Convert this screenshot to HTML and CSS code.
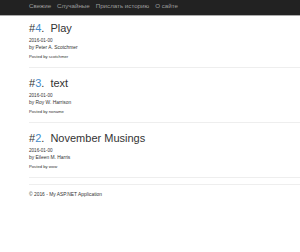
FILE: index.html
```html
<!DOCTYPE html>
<html lang="ru">
<head>
    <meta charset="UTF-8">
    <meta name="viewport" content="width=device-width, initial-scale=1.0">
    <title>Истории</title>
    <link rel="stylesheet" href="styles.css">
</head>
<body>
    <div class="navbar">
        <div class="container">
            <ul class="nav">
                <li><a href="#">Свежие</a></li>
                <li><a href="#">Случайные</a></li>
                <li><a href="#">Прислать историю</a></li>
                <li><a href="#">О сайте</a></li>
            </ul>
        </div>
    </div>

    <div class="container body-content">
        <div class="story">
            <h2>#<span class="num">4</span>.&nbsp; Play</h2>
            <div class="date">2016-01-00</div>
            <div class="author">by Peter A. Scotchmer</div>
            <div class="posted">Posted by scotchmer</div>
        </div>

        <div class="story">
            <h2>#<span class="num">3</span>.&nbsp; text</h2>
            <div class="date">2016-01-00</div>
            <div class="author">by Roy W. Harrison</div>
            <div class="posted">Posted by noname</div>
        </div>

        <div class="story">
            <h2>#<span class="num">2</span>.&nbsp; November Musings</h2>
            <div class="date">2016-01-00</div>
            <div class="author">by Eileen M. Harris</div>
            <div class="posted">Posted by wow</div>
        </div>

        <footer>
            <p>&copy; 2016 - My ASP.NET Application</p>
        </footer>
    </div>
</body>
</html>
```

FILE: styles.css
```css
body {
    margin: 0;
    font-family: "Liberation Sans", Arial, sans-serif;
    color: #333;
    background: #fff;
}

.container {
    padding-left: 29px;
}

.navbar {
    height: 15px;
    background-color: #222;
    border-bottom: 1px solid #aaa;
}

.nav {
    list-style: none;
    margin: 0;
    padding: 0;
    display: flex;
    gap: 6px;
}

.nav a {
    display: block;
    color: #9d9d9d;
    text-decoration: none;
    font-size: 6.2px;
    line-height: 12px;
}

.body-content {
    padding-top: 6px;
}

.story {
    padding-bottom: 7px;
    border-bottom: 1px solid #eee;
    margin-bottom: 9px;
}

.story:last-of-type {
    margin-bottom: 6px;
}

h2 {
    margin: 0;
    font-size: 11px;
    line-height: 12px;
    font-weight: normal;
}

h2 .num {
    color: #428bca;
}

.date {
    margin-top: 3px;
    font-size: 4.6px;
    line-height: 7px;
}

.author {
    font-size: 4.9px;
    line-height: 7px;
}

.posted {
    margin-top: 3px;
    font-size: 4.2px;
    line-height: 6px;
}

footer {
    border-top: 1px solid #eee;
    padding-top: 6px;
}

footer p {
    margin: 0;
    font-size: 4.9px;
    line-height: 7px;
}
```
